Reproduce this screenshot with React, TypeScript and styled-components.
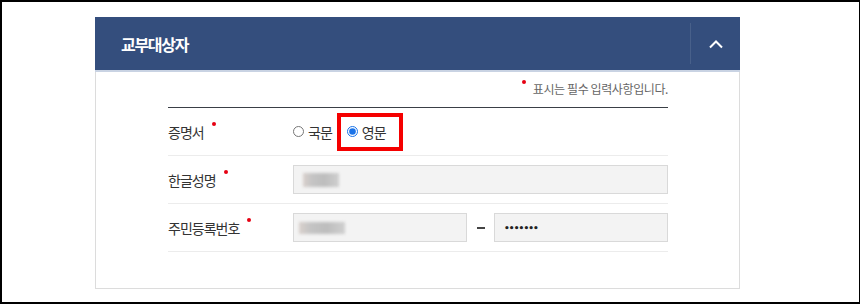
import styled, { createGlobalStyle } from "styled-components";

const GlobalStyle = createGlobalStyle`
    html, body {
        margin: 0;
        padding: 0;
        background: #fff;
    }
    body {
        font-family: "Noto Sans CJK KR", "Noto Sans", sans-serif;
        color: #333;
    }
`

const Frame = styled.div`
    box-sizing: border-box;
    width: 860px;
    height: 304px;
    border: 2px solid #000;
    border-right-width: 1px;
    padding: 15px 0 0 93px;
`

const Panel = styled.section`
    width: 645px;
`

const PanelHeader = styled.div`
    display: flex;
    align-items: stretch;
    height: 53px;
    background-color: #344e7d;
    border-bottom: 2px solid #c9d3e3;
`

const PanelTitle = styled.h2`
    flex: 1;
    display: flex;
    align-items: center;
    margin: 0;
    padding-left: 26px;
    font-size: 16px;
    font-weight: 700;
    letter-spacing: -1.3px;
    color: #fff;
`

const ToggleArea = styled.div`
    display: flex;
    align-items: center;
    padding: 6px 0;
`

const Divider = styled.span`
    align-self: stretch;
    width: 1px;
    background-color: rgba(255, 255, 255, 0.1);
`

const ToggleButton = styled.button`
    display: flex;
    align-items: center;
    justify-content: center;
    width: 49px;
    height: 100%;
    padding: 0;
    border: 0;
    background: transparent;
    cursor: pointer;
`

const PanelBody = styled.div`
    border: 1px solid #dcdcdc;
    border-top: 0;
    padding: 7px 71px 36px 72px;
`

const Notice = styled.p`
    display: flex;
    justify-content: flex-end;
    align-items: center;
    margin: 0 0 10px;
    height: 18px;
    font-size: 12px;
    letter-spacing: -0.4px;
    color: #666;
`

const Dot = styled.i<{ $lift: number }>`
    display: inline-block;
    width: 4px;
    height: 4px;
    border-radius: 50%;
    background-color: #e60012;
    vertical-align: ${(p) => p.$lift}px;
`

const NoticeDot = styled(Dot)`
    margin-right: 7px;
    align-self: flex-start;
    margin-top: 1px;
`

const FormTable = styled.div`
    border-top: 1px solid #3a3f46;
`

const FormRow = styled.div`
    display: flex;
    align-items: center;
    height: 47px;
    border-bottom: 1px solid #ececec;
`

const Label = styled.div`
    width: 125px;
    flex-shrink: 0;
    font-size: 14px;
    letter-spacing: -1px;
    color: #333;

    ${Dot} {
        margin-left: 8px;
    }
`

const Field = styled.div`
    flex: 1;
    display: flex;
    align-items: center;
`

const RadioGroup = styled.div`
    display: flex;
    align-items: center;
    gap: 5px;
`

const RadioOption = styled.label<{ $marked?: boolean }>`
    display: flex;
    align-items: center;
    gap: 4px;
    font-size: 14px;
    letter-spacing: -1px;
    color: #333;
    box-sizing: border-box;
    height: 38px;
    padding: ${(p) => (p.$marked ? "0 13px 0 6px" : "0")};
    border: ${(p) => (p.$marked ? "4px solid #f50000" : "0")};

    input {
        width: 11px;
        height: 11px;
        margin: 0;
        accent-color: #1a73e8;
    }
`

const InputBox = styled.div<{ $grow?: boolean }>`
    box-sizing: border-box;
    display: flex;
    align-items: center;
    height: 29px;
    flex: ${(p) => (p.$grow ? 1 : "0 0 174px")};
    padding-left: 9px;
    background-color: #f3f3f3;
    border: 1px solid #d9d9d9;
`

const Masked = styled.span<{ $w: number; $h: number; $shift?: number }>`
    display: inline-block;
    width: ${(p) => p.$w}px;
    height: ${(p) => p.$h}px;
    margin-left: ${(p) => p.$shift ?? 0}px;
    background: linear-gradient(90deg, #d9d0cc 0%, #c4c4c4 25%, #bdbdbd 60%, #cfcfcf 100%);
    filter: blur(1.5px);
`

const Secret = styled.span`
    font-family: "DejaVu Sans", sans-serif;
    font-size: 9px;
    font-weight: 700;
    letter-spacing: -0.9px;
    color: #222;
`

const Dash = styled.span`
    display: flex;
    justify-content: center;
    width: 27px;

    &::before {
        content: "";
        width: 8px;
        height: 2px;
        background-color: #444;
    }
`

const ChevronUp = () => (
    <svg width="16" height="10" viewBox="0 0 16 10">
        <polyline points="2,8.5 8,2.5 14,8.5" fill="none" stroke="#fff" strokeWidth="2" />
    </svg>
)

const App = () => {
    return (
        <>
            <GlobalStyle />
            <Frame>
                <Panel>
                    <PanelHeader>
                        <PanelTitle>교부대상자</PanelTitle>
                        <ToggleArea>
                            <Divider />
                            <ToggleButton aria-label="접기">
                                <ChevronUp />
                            </ToggleButton>
                        </ToggleArea>
                    </PanelHeader>
                    <PanelBody>
                        <Notice>
                            <NoticeDot $lift={0} />
                            표시는 필수 입력사항입니다.
                        </Notice>
                        <FormTable>
                            <FormRow>
                                <Label>증명서<Dot $lift={12} /></Label>
                                <Field>
                                    <RadioGroup>
                                        <RadioOption>
                                            <input type="radio" name="cert" readOnly />
                                            국문
                                        </RadioOption>
                                        <RadioOption $marked>
                                            <input type="radio" name="cert" defaultChecked />
                                            영문
                                        </RadioOption>
                                    </RadioGroup>
                                </Field>
                            </FormRow>
                            <FormRow>
                                <Label>한글성명<Dot $lift={12} /></Label>
                                <Field>
                                    <InputBox $grow>
                                        <Masked $w={36} $h={14} />
                                    </InputBox>
                                </Field>
                            </FormRow>
                            <FormRow>
                                <Label>주민등록번호<Dot $lift={12} /></Label>
                                <Field>
                                    <InputBox $grow>
                                        <Masked $w={46} $h={12} $shift={-4} />
                                    </InputBox>
                                    <Dash />
                                    <InputBox>
                                        <Secret>•••••••</Secret>
                                    </InputBox>
                                </Field>
                            </FormRow>
                        </FormTable>
                    </PanelBody>
                </Panel>
            </Frame>
        </>
    );
};

export default App;
